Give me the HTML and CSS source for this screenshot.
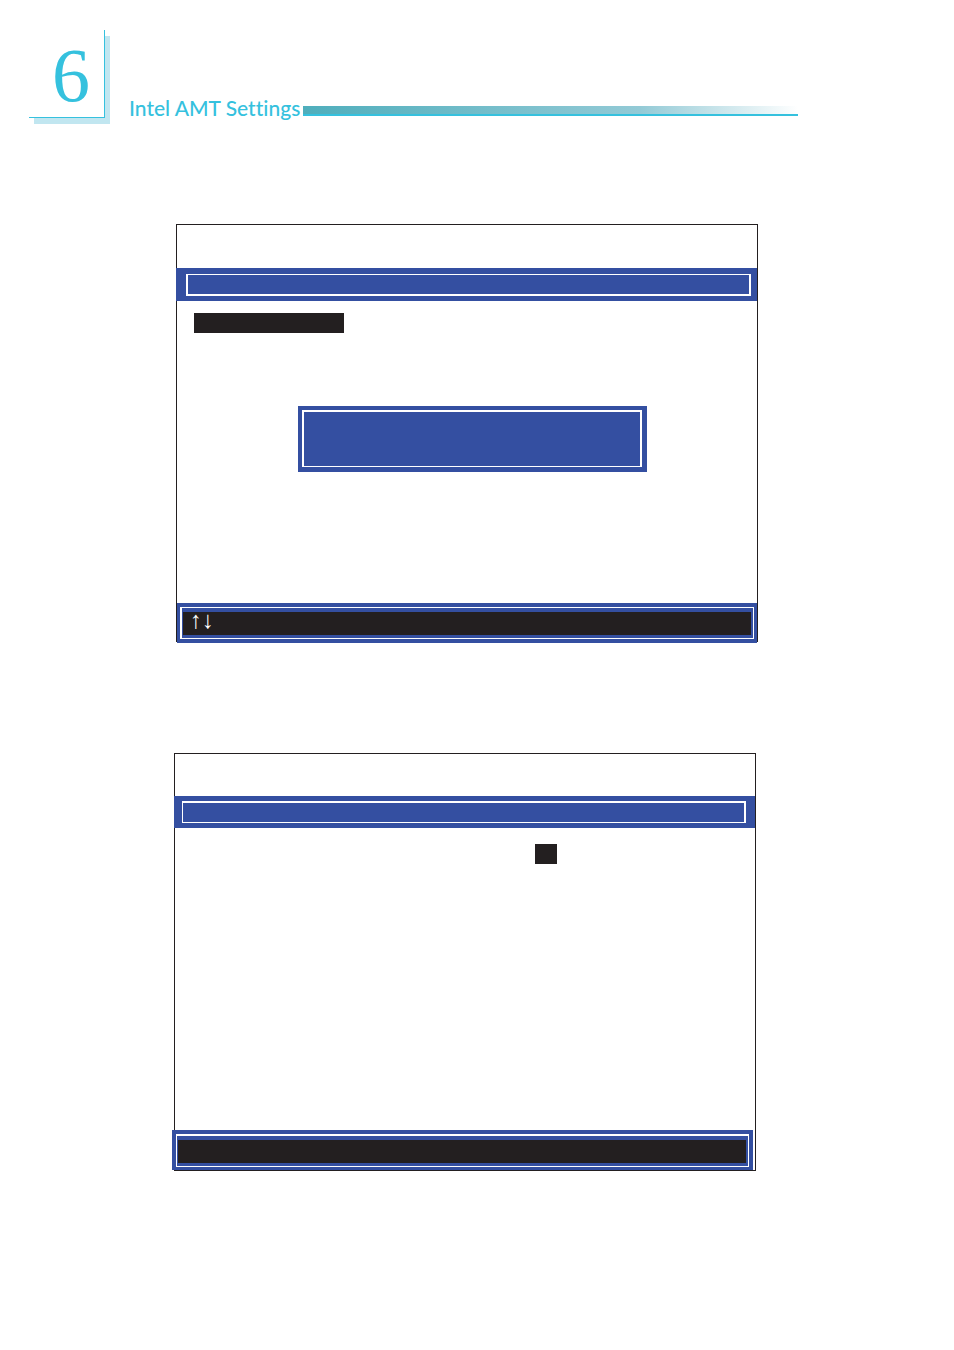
FILE: index.html
```html
<!DOCTYPE html>
<html lang="en">
<head>
    <meta charset="UTF-8">
    <meta name="viewport" content="width=device-width, initial-scale=1.0">
    <title>Intel AMT Settings</title>
    <link rel="stylesheet" href="styles.css">
</head>
<body>
    <header class="chapter">
        <div class="chapter-number">6</div>
        <h1 class="chapter-title">Intel AMT Settings</h1>
        <div class="chapter-rule"></div>
    </header>

    <main>
        <section class="screen screen-menu">
            <div class="title-bar"><div class="title-line"></div></div>
            <div class="screen-body">
                <div class="selected"></div>
                <div class="dialog"><div class="dialog-line"></div></div>
            </div>
            <div class="key-bar">
                <div class="key-line"><div class="keys">↑↓</div></div>
            </div>
        </section>

        <section class="screen screen-option">
            <div class="title-bar"><div class="title-line"></div></div>
            <div class="screen-body">
                <div class="selected"></div>
            </div>
            <div class="key-bar">
                <div class="key-line"><div class="keys"></div></div>
            </div>
        </section>
    </main>
</body>
</html>
```
FILE: styles.css
```css
* {
    box-sizing: border-box;
}
body {
    margin: 0;
    padding: 30px 0 180px;
    background-color: #ffffff;
    font-family: Lato, sans-serif;
}

/* chapter heading */
.chapter {
    display: flex;
    align-items: flex-end;
    margin: 0 156px 106px 29px;
    color: #35c1de;
}
.chapter-number {
    width: 76px;
    height: 88px;
    padding-left: 9px;
    background-color: #ffffff;
    border-right: 1px solid #35c1de;
    border-bottom: 1px solid #35c1de;
    box-shadow: 5px 6px 0 #c1e6f0;
    text-align: center;
    font-family: "Liberation Serif", serif;
    font-size: 76px;
    line-height: 90px;
}
.chapter-title {
    margin: 0 3px 0 24px;
    font-size: 21px;
    font-weight: 500;
    font-variant-ligatures: none;
    line-height: 20px;
    white-space: nowrap;
}
.chapter-rule {
    flex: 1;
    height: 10px;
    margin-bottom: 2px;
    border-bottom: 2px solid #35c1de;
    background: linear-gradient(to right, #4faebc, #93cad6 68%, #ffffff);
}

/* BIOS screens */
.screen {
    border: 1px solid #231f20;
}
.screen-menu {
    margin: 0 196px 111px 176px;
    padding-top: 43px;
}
.screen-option {
    margin: 0 198px 0 174px;
    padding-top: 42px;
}
.title-bar {
    display: flex;
    margin-left: -1px;
    background-color: #344fa1;
}
.title-line {
    flex: 1;
    height: 22px;
    border: 2px solid #ffffff;
}
.screen-menu .title-bar {
    padding: 6px 6px 5px 10px;
}
.screen-menu .title-line {
    border-top-width: 1px;
}
.screen-option .title-bar {
    padding: 5px 9px 5px 8px;
}
.screen-option .title-line {
    border-bottom-width: 1px;
    border-left-width: 1px;
}
.screen-body {
    min-height: 302px;
    padding: 12px 110px 0 17px;
}
.selected {
    width: 150px;
    height: 20px;
    background-color: #231f20;
}
.screen-option .screen-body {
    padding: 16px 0 0 360px;
}
.screen-option .selected {
    width: 22px;
}
.dialog {
    margin: 73px 0 0 104px;
    padding: 4px 5px 5px 4px;
    background-color: #344fa1;
}
.dialog-line {
    height: 57px;
    border: 2px solid #ffffff;
    border-bottom-width: 1px;
}
.key-bar {
    position: relative;
    margin-bottom: -2px;
    padding: 4px 3px;
    background-color: #344fa1;
}
.key-line {
    padding: 4px 2px 3px 1px;
    border: 1px solid #ffffff;
    border-left-width: 2px;
}
.keys {
    height: 23px;
    padding-left: 7px;
    background-color: #231f20;
    color: #ffffff;
    font-family: "Liberation Serif", serif;
    font-size: 24px;
    line-height: 16px;
}
.screen-option .key-bar {
    margin: 0 2px 0 -3px;
    padding: 4px 4px 3px;
}
.screen-option .key-line {
    border-width: 2px 1px 1px;
}
```
